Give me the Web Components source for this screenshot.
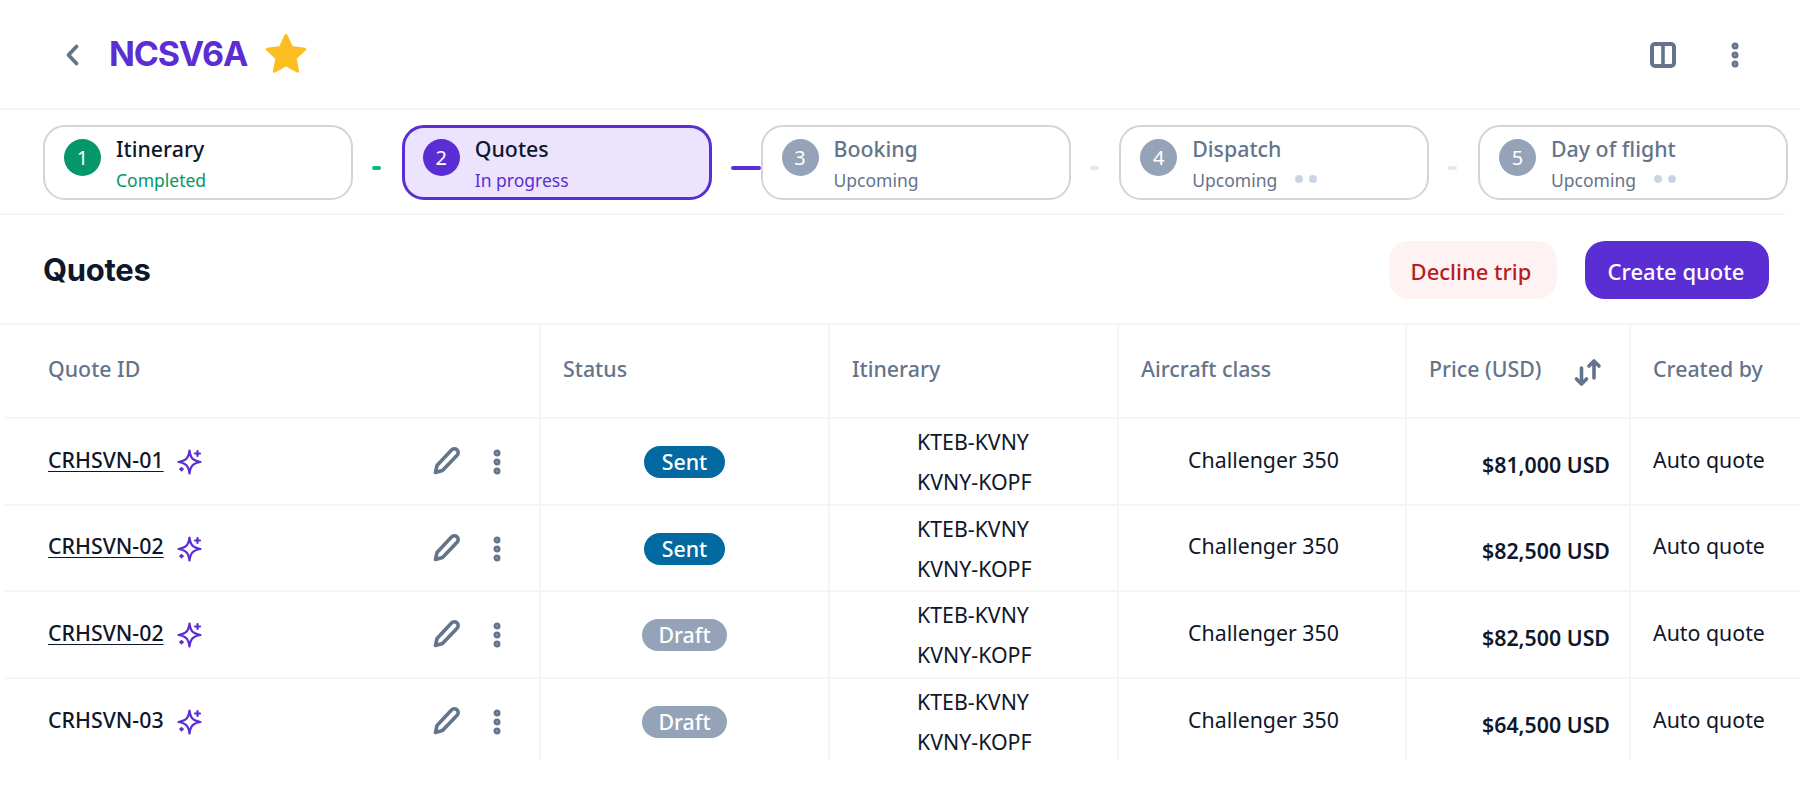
<!DOCTYPE html>
<html>
<head>
<meta charset="utf-8">
<title>Quotes</title>
<style>
	html, body{ margin: 0; background: #fff; overflow: hidden; }
	body{ font-family: "Noto Sans", "Open Sans", sans-serif; color: #0f172a; height: 795px; }
</style>
</head>
<body>
<trip-header trip="NCSV6A"></trip-header>
<step-bar>
	<step-card num="1" name="Itinerary" sub="Completed" state="done"></step-card>
	<step-link state="done"></step-link>
	<step-card num="2" name="Quotes" sub="In progress" state="active"></step-card>
	<step-link state="active"></step-link>
	<step-card num="3" name="Booking" sub="Upcoming"></step-card>
	<step-link></step-link>
	<step-card num="4" name="Dispatch" sub="Upcoming" dots></step-card>
	<step-link></step-link>
	<step-card num="5" name="Day of flight" sub="Upcoming" dots></step-card>
</step-bar>
<quotes-bar></quotes-bar>
<quote-table>
	<quote-row id-text="CRHSVN-01" status="Sent" price="$81,000 USD" link></quote-row>
	<quote-row id-text="CRHSVN-02" status="Sent" price="$82,500 USD" link></quote-row>
	<quote-row id-text="CRHSVN-02" status="Draft" price="$82,500 USD" link></quote-row>
	<quote-row id-text="CRHSVN-03" status="Draft" price="$64,500 USD"></quote-row>
</quote-table>
<script>
const KEBAB = `<svg width="10" height="26" viewBox="0 0 10 26"><g fill="#8290a6" stroke="#64748b" stroke-width="2.2"><circle cx="5" cy="4" r="2.4"/><circle cx="5" cy="13" r="2.4"/><circle cx="5" cy="22" r="2.4"/></g></svg>`
const COLUMNS = "534px 289px 289px 288px 224px 1fr"

function define(name, html){
	class El extends HTMLElement{
		constructor(){
			super()
			this.attachShadow({mode: 'open'})
		}
		connectedCallback(){
			this.shadowRoot.innerHTML = html(this)
		}
	}
	customElements.define(name, El)
}

define("trip-header", el => `
	<style>
		:host{ display: flex; align-items: center; height: 108px; border-bottom: 2px solid #f5f5f5; }
		.back{ margin-left: 64px; width: 16px; height: 24px; margin-top: 2px; }
		h1{ margin: 0 0 0 29px; font: 700 34px/1 Inter, sans-serif; letter-spacing: -1.2px; color: #5b2ed3; }
		.star{ margin-left: 17px; }
		.tools{ margin-left: auto; display: flex; align-items: center; gap: 54px; margin-right: 60px; }
		.panel{ margin-top: 2px; }
		.more{ display: flex; margin-top: 2px; }
	</style>
	<svg class="back" viewBox="0 0 16 24"><path d="M12.5 3.5 L4.5 12 L12.5 20.5" fill="none" stroke="#64748b" stroke-width="3.8" stroke-linecap="round" stroke-linejoin="round"/></svg>
	<h1>${el.getAttribute("trip")}</h1>
	<svg class="star" width="44" height="44" viewBox="0 0 44 44"><path d="M22 3.5 L27.6 15.6 L40.8 17.2 L31.1 26.2 L33.7 39.3 L22 32.8 L10.3 39.3 L12.9 26.2 L3.2 17.2 L16.4 15.6 Z" fill="#fdbe22" stroke="#fdbe22" stroke-width="3" stroke-linejoin="round"/></svg>
	<div class="tools">
		<svg class="panel" width="26" height="26" viewBox="0 0 26 26"><rect x="2" y="2" width="22" height="22" rx="3" fill="none" stroke="#64748b" stroke-width="4"/><path d="M13 2 V24" stroke="#64748b" stroke-width="3.6"/></svg>
		<span class="more">${KEBAB}</span>
	</div>
`)

define("step-bar", () => `
	<style>
		:host{ display: flex; align-items: flex-start; padding: 15px 0 13px 43px; width: 1742px; border-bottom: 2px solid #f5f5f5; }
	</style>
	<slot></slot>
`)

define("step-card", el => {
	const state = el.getAttribute("state") || ""
	const dots = el.hasAttribute("dots") ? `<i></i><i class="two"></i>` : ""
	return `
	<style>
		:host{ display: block; width: 310px; height: 75px; flex: none; }
		.card{ box-sizing: border-box; height: 75px; border: 2px solid #d4d4d4; border-radius: 22px; display: flex; padding: 11px 0 0 19px; background: #fff; }
		.num{ width: 37px; height: 37px; border-radius: 50%; background: #94a3b8; color: #fff; font-size: 20px; line-height: 38px; text-align: center; flex: none; margin-top: 1px; }
		.text{ margin-left: 15px; margin-top: -3px; }
		.name{ font-size: 21.33px; line-height: 28px; font-weight: 500; color: #64748b; }
		.sub{ font-size: 17.5px; line-height: 24px; margin-top: 5px; color: #64748b; display: flex; align-items: center; white-space: nowrap; }
		i{ width: 8px; height: 8px; border-radius: 50%; background: #cbd5e1; margin-left: 18px; margin-top: -3px; }
		i.two{ margin-left: 6px; }
		.done .num{ background: #059669; }
		.done .name{ color: #0f172a; }
		.done .sub{ color: #059669; }
		.active.card{ border: 3px solid #5b2ed3; background: #ece4ff; padding: 10px 0 0 18px; }
		.active .num{ background: #5b2ed3; }
		.active .name{ color: #0f172a; }
		.active .sub{ color: #5b2ed3; }
	</style>
	<div class="card ${state}">
		<div class="num">${el.getAttribute("num")}</div>
		<div class="text">
			<div class="name">${el.getAttribute("name")}</div>
			<div class="sub">${el.getAttribute("sub")}${dots}</div>
		</div>
	</div>`
})

define("step-link", el => {
	const state = el.getAttribute("state")
	const color = state == "done" ? "#10b981" : state == "active" ? "#5b2ed3" : "#e5e7eb"
	const width = state == "active" ? 30 : 9
	return `
	<style>
		:host{ display: block; width: 48.75px; height: 75px; flex: none; }
		div{ width: ${width}px; height: 4px; border-radius: 2px; background: ${color}; margin: 41px 0 0 19px; }
	</style>
	<div></div>`
})

define("quotes-bar", () => `
	<style>
		:host{ display: flex; align-items: center; height: 108px; border-bottom: 2px solid #f5f5f5; }
		h2{ margin: 1px auto 0 43px; font: 700 31px/1 Inter, sans-serif; letter-spacing: -0.3px; color: #0f172a; }
		button{ height: 58px; border: 0; border-radius: 20px; font: 500 22px "Noto Sans", sans-serif; padding: 2px 2px 0 0; margin-top: 2px; }
		.decline{ width: 168px; background: #fef2f2; color: #b91c1c; padding-right: 4px; }
		.create{ width: 184px; margin-left: 28px; margin-right: 31px; background: #5b2ed3; color: #fff; }
	</style>
	<h2>Quotes</h2>
	<button class="decline">Decline trip</button>
	<button class="create">Create quote</button>
`)

define("quote-table", () => `
	<style>
		:host{ display: block; height: 435px; overflow: hidden; padding-left: 5px; }
		.head{ display: grid; grid-template-columns: ${COLUMNS}; height: 92px; border-bottom: 2px solid #f5f5f5; color: #64748b; font-size: 21.33px; font-weight: 500; }
		.head div{ border-left: 2px solid #f5f5f5; padding: 30px 0 0 22px; line-height: 27px; position: relative; white-space: nowrap; }
		.head div:first-child{ border-left: 0; padding-left: 43px; }
		.sort{ position: absolute; left: 166px; top: 33px; }
	</style>
	<div class="head">
		<div>Quote ID</div>
		<div>Status</div>
		<div>Itinerary</div>
		<div>Aircraft class</div>
		<div>Price (USD)<svg class="sort" width="30" height="30" viewBox="0 0 30 30"><g fill="none" stroke="#64748b" stroke-width="3.6" stroke-linecap="round" stroke-linejoin="round"><path d="M8.5 10 V26 M3.5 21 L8.5 26 L13.5 21"/><path d="M21 20 V3 M16 8 L21 3 L26 8"/></g></svg></div>
		<div>Created by</div>
	</div>
	<slot></slot>
`)

define("quote-row", el => {
	const status = el.getAttribute("status")
	const link = el.hasAttribute("link") ? "link" : ""
	return `
	<style>
		:host{ display: grid; grid-template-columns: ${COLUMNS}; height: 84.6px; border-bottom: 2px solid #f5f5f5; font-size: 21.33px; color: #0f172a; }
		.cell{ border-left: 2px solid #f5f5f5; display: flex; align-items: center; min-width: 0; white-space: nowrap; }
		.first{ border-left: 0; padding-left: 43px; }
		.id{ font-weight: 500; line-height: 27px; margin-top: -4px; }
		.id.link{ text-decoration: underline; text-underline-offset: 3px; text-decoration-thickness: 1px; }
		.spark{ margin-left: 13px; margin-top: 2px; }
		.pencil{ margin-left: auto; }
		.kebab{ margin: 2px 37px 0 32px; display: flex; }
		.status{ justify-content: center; }
		.pill{ height: 32px; line-height: 32px; border-radius: 16px; padding: 0 18px; color: #fff; font-weight: 500; margin-top: 2px; }
		.pill.Sent{ background: #0369a1; }
		.pill.Draft{ background: #94a3b8; padding: 0 16px; }
		.route{ padding-left: 87px; display: block; padding-top: 3px; line-height: 40px; }
		.plane{ padding-left: 69px; }
		.plane span, .by span{ margin-top: -4px; }
		.price{ justify-content: flex-end; padding-right: 19px; font-weight: 600; }
		.price span{ margin-top: 6px; }
		.by{ padding-left: 22px; }
	</style>
	<div class="cell first">
		<span class="id ${link}">${el.getAttribute("id-text")}</span>
		<svg class="spark" width="26" height="28" viewBox="0 0 26 28"><g fill="none" stroke="#5b2ed3" stroke-width="2.2" stroke-linejoin="round" stroke-linecap="round"><path d="M12.5 2.5 C13.5 10 15.5 12.5 23.5 14 C15.5 15.5 13.5 18 12.5 25.5 C11.5 18 9.5 15.5 1.5 14 C9.5 12.5 11.5 10 12.5 2.5 Z"/><path d="M20.5 3 V8 M18 5.5 H23"/><path d="M4.5 20 V22.4 M3.3 21.2 H5.7"/></g></svg>
		<svg class="pencil" width="28" height="30" viewBox="0 0 28 30"><path d="M3.5 26.5 L5 19.5 L19.5 4 C21 2.4 23.4 2.4 25 3.8 C26.5 5.2 26.6 7.6 25.1 9.2 L10.5 24.5 Z" fill="none" stroke="#64748b" stroke-width="3.6" stroke-linejoin="round"/></svg>
		<span class="kebab">${KEBAB}</span>
	</div>
	<div class="cell status"><span class="pill ${status}">${status}</span></div>
	<div class="cell route">KTEB-KVNY<br>KVNY-KOPF</div>
	<div class="cell plane"><span>Challenger 350</span></div>
	<div class="cell price"><span>${el.getAttribute("price")}</span></div>
	<div class="cell by"><span>Auto quote</span></div>`
})
</script>
</body>
</html>
